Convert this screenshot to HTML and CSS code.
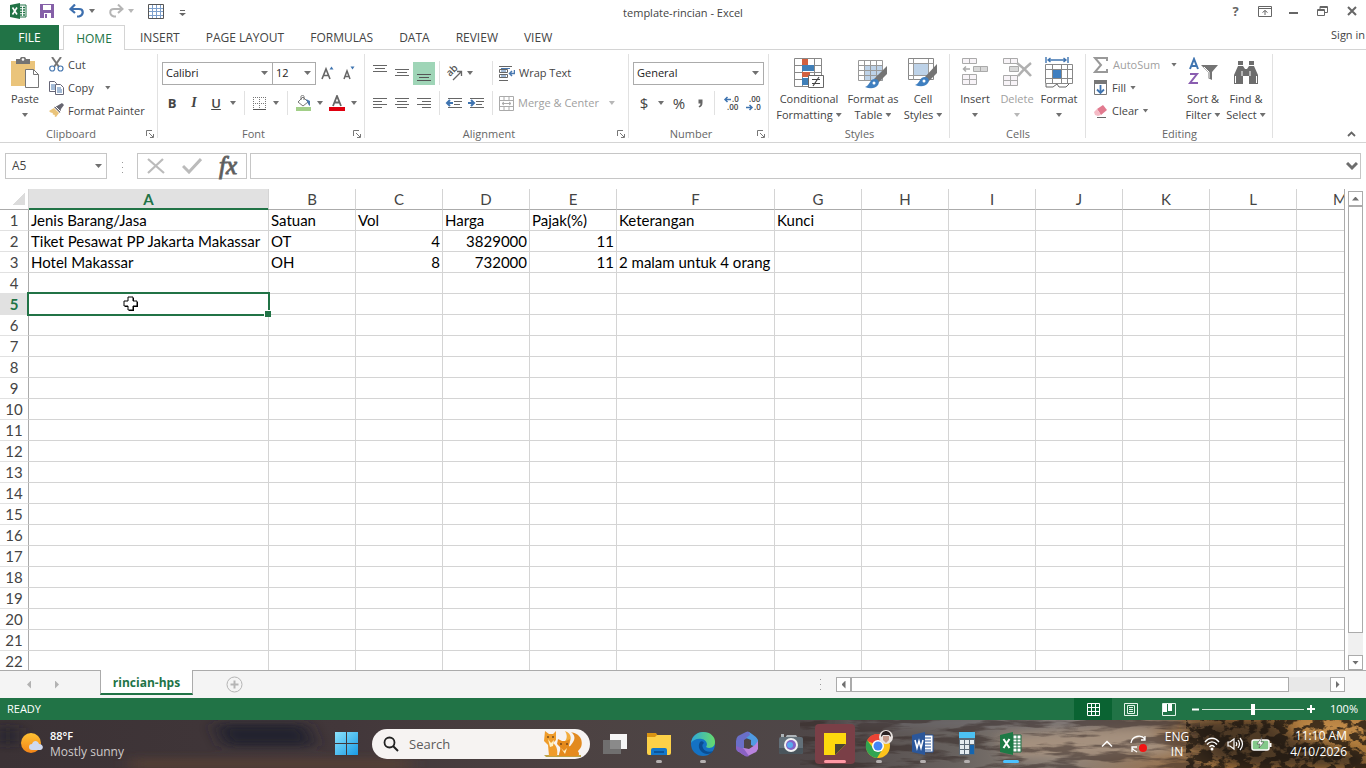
FILE: index.html
```html
<!DOCTYPE html>
<html lang="en">
<head>
<meta charset="utf-8">
<title>template-rincian - Excel</title>
<link rel="stylesheet" href="styles.css">
</head>
<body>
<header class="titlebar">
  <div class="quick">
    <svg class="app" width="17" height="17" viewBox="0 0 17 17"><path d="M8 2h8v12H8z" fill="#fff" stroke="#217346"/><path d="M10 4.500h2M13 4.500h2M10 7h2M13 7h2M10 9.500h2M13 9.500h2M10 12h2M13 12h2" stroke="#217346" stroke-width="1.400"/><path d="M0 2 10 0v16L0 14z" fill="#217346"/><path d="m2.500 4.500 4.500 7M7 4.500l-4.500 7" stroke="#fff" stroke-width="1.600"/></svg>
    <button class="q" aria-label="Save"><svg width="14" height="14" viewBox="0 0 14 14"><path d="M0 0h14v14H0z" fill="#8560a8"/><path d="M3 1h8v5H3zM4 9h7v5H4z" fill="#fff"/><path d="M5 10h2v4H5z" fill="#8560a8"/></svg></button>
    <button class="q" aria-label="Undo"><svg width="16" height="14" viewBox="0 0 16 14"><path d="M2 5h8c5 0 5 6 0 7.500H8M6 .5 1.500 5 6 9" fill="none" stroke="#3d6fae" stroke-width="2.200"/></svg></button><i class="arr"></i>
    <button class="q redo" aria-label="Redo"><svg width="16" height="14" viewBox="0 0 16 14"><path d="M14 5H6c-5 0-5 6 0 7.500h2M10 .5 14.500 5 10 9" fill="none" stroke="#b5b5b5" stroke-width="2"/></svg></button><i class="arr pale"></i>
    <button class="q table" aria-label="Table"><svg width="16" height="15" viewBox="0 0 16 15"><path d="M.5.5h15v14H.5z" fill="#fff" stroke="#555"/><path d="M1 4.500h14M1 7.500h14M1 11.500h14M4.500 1v13M8.500 1v13M12.500 1v13" stroke="#7da0cc"/></svg></button>
    <button class="q more" aria-label="Customize toolbar"><svg width="7" height="6" viewBox="0 0 7 6"><path d="M1 .5h5" stroke="#666"/><path d="M0 3h7L3.500 6z" fill="#666"/></svg></button>
  </div>
  <h1 class="doc">template-rincian - Excel</h1>
  <div class="window">
    <button aria-label="Help"><b>?</b></button>
    <button aria-label="Ribbon display options"><svg width="14" height="11" viewBox="0 0 14 11"><path d="M.5.5h13v10H.5zM1 2.500h12M7 9V4.500M4.500 6.500 7 4.500l2.500 2" fill="none" stroke="#666"/></svg></button>
    <button aria-label="Minimize"><svg width="9" height="11" viewBox="0 0 9 11"><path d="M0 7h9" stroke="#666" stroke-width="2"/></svg></button>
    <button aria-label="Restore"><svg width="11" height="10" viewBox="0 0 11 10"><path d="M.5 3.500h7v6h-7zM.5 4.500h7M3 3V.5h7.500v6H8M3 1.500h7" fill="none" stroke="#666"/></svg></button>
    <button aria-label="Close"><svg width="10" height="10" viewBox="0 0 10 10"><path d="m1 1 8 8M9 1 1 9" stroke="#666" stroke-width="2"/></svg></button>
  </div>
</header>
<nav class="tabs">
  <button class="file">FILE</button><button class="on">HOME</button><button>INSERT</button><button>PAGE LAYOUT</button><button>FORMULAS</button><button>DATA</button><button>REVIEW</button><button>VIEW</button>
  <a class="signin" href="#">Sign in</a>
</nav>
<section class="ribbon" aria-label="Home ribbon">
  <div class="group clip">
    <div class="body">
      <button class="big paste"><svg width="30" height="32" viewBox="0 0 30 32"><path d="M1 4h24v25H1z" fill="#eac47b"/><path d="M6 2h4c0-3 6-3 6 0h4v5H6z" fill="#737373"/><circle cx="13" cy="2.500" r="1.300" fill="#fff"/><path d="M15.500 12.500h8l5 5v13h-13z" fill="#fff" stroke="#777"/><path d="M23.500 12.500v5h5" fill="none" stroke="#777"/></svg><span>Paste</span><i class="arr"></i></button>
      <div class="stack">
        <button class="line"><svg width="15" height="15" viewBox="0 0 15 15"><path d="m3 0 7 10M12 0 5 10" stroke="#777" stroke-width="2"/><circle cx="3.200" cy="11.500" r="2.500" fill="#fff" stroke="#4878b0" stroke-width="1.200"/><circle cx="11.500" cy="11.500" r="2.500" fill="#fff" stroke="#4878b0" stroke-width="1.200"/></svg>Cut</button>
        <button class="line"><svg width="15" height="14" viewBox="0 0 15 14"><path d="M.5.500h5l2 2v8h-7z" fill="#fff" stroke="#667"/><path d="M2 4h4M2 6h4M2 8h4" stroke="#4878b0"/><path d="M6.500 3.500h5l3 3v7h-8z" fill="#fff" stroke="#667"/><path d="M8 7h4M8 9h5M8 11h5" stroke="#4878b0"/></svg>Copy<i class="arr far"></i></button>
        <button class="line"><svg width="15" height="15" viewBox="0 0 15 15"><path d="m0 8 5-3 5 5-3 4c-1 0-2-1-1-2-2 0-3-1-2-2-2 0-3-1-4-2z" fill="#eac47b"/><path d="m5 4 3-1 5-3 2 2-3 4-1 4z" fill="#666570"/><path d="m6 3 6 6" stroke="#fff"/></svg>Format Painter</button>
      </div>
    </div>
    <div class="label"><span>Clipboard</span><button class="launch" aria-label="Clipboard settings"><svg width="8" height="8" viewBox="0 0 8 8"><path d="M.5 6V.5H6M3 3l4 4M7.500 4v3.500H4" fill="none" stroke="#777"/></svg></button></div>
  </div>
  <div class="group font">
    <div class="body rows">
      <div class="row combos"><select class="face" aria-label="Font"><option>Calibri</option></select><select class="size" aria-label="Font size"><option>12</option></select>
        <button class="t22" aria-label="Increase font size"><svg width="13" height="14" viewBox="0 0 13 14"><path d="M1 13 5 3l4 10M2.500 9.500h5" fill="none" stroke="#666" stroke-width="1.600"/><path d="m8.500 3.500 2-3 2 3z" fill="#3f74b0"/></svg></button>
        <button class="t22" aria-label="Decrease font size"><svg width="12" height="14" viewBox="0 0 12 14"><path d="m1 13 3-8 3 8M2 10.500h4" fill="none" stroke="#666" stroke-width="1.500"/><path d="m7.500.5 2 3 2-3z" fill="#3f74b0"/></svg></button></div>
      <div class="row second">
        <button class="t22"><b>B</b></button><button class="t22 ital">I</button><button class="t22 under">U</button><button class="t12" aria-label="Underline options"><i class="arr"></i></button><i class="sep s10"></i>
        <button class="t20" aria-label="Borders"><svg width="13" height="13" viewBox="0 0 13 13"><path d="M.5 0v12M6.500 0v12M12.500 0v12M0 .5h13M0 6.500h13" fill="none" stroke="#777" stroke-dasharray="1 1"/><path d="M0 12.500h13" stroke="#555"/></svg></button><button class="t14" aria-label="Border options"><i class="arr"></i></button><i class="sep s8"></i>
        <button class="t24" aria-label="Fill color"><svg width="17" height="16" viewBox="0 0 17 16"><path d="m3 7 5-5 5 5-5 4z" fill="#fff" stroke="#777"/><path d="M6 5V1.500c0-1.500 3-1.500 3 0V5" fill="none" stroke="#777"/><path d="m11 4 4 2v5c-2-1-2-3-4-7" fill="#4878b0"/><path d="M1 12h15v4H1z" fill="#a2cf88"/></svg></button><button class="t10" aria-label="Fill color options"><i class="arr"></i></button>
        <button class="t24" aria-label="Font color"><svg width="16" height="16" viewBox="0 0 16 16"><path d="m4 11 4-10 4 10M5.500 7.500h5" fill="none" stroke="#666" stroke-width="1.800"/><path d="M0 12h16v4H0z" fill="#e0000f"/></svg></button><button class="t10" aria-label="Font color options"><i class="arr"></i></button>
      </div>
    </div>
    <div class="label"><span>Font</span><button class="launch" aria-label="Font settings"><svg width="8" height="8" viewBox="0 0 8 8"><path d="M.5 6V.5H6M3 3l4 4M7.500 4v3.500H4" fill="none" stroke="#777"/></svg></button></div>
  </div>
  <div class="group align">
    <div class="body rows">
      <div class="row">
        <button class="t22 up" aria-label="Top align"><svg width="14" height="8" viewBox="0 0 14 8"><path d="M0 .5h14M2 3.500h10M0 6.500h14" stroke="#666"/></svg></button><button class="t22" aria-label="Middle align"><svg width="14" height="8" viewBox="0 0 14 8"><path d="M0 .5h14M2 3.500h10M0 6.500h14" stroke="#666"/></svg></button><button class="t22 down active" aria-label="Bottom align"><svg width="14" height="8" viewBox="0 0 14 8"><path d="M0 .5h14M2 3.500h10M0 6.500h14" stroke="#555"/></svg></button><i class="sep s8"></i>
        <span class="slot"><button class="t22" aria-label="Orientation"><svg width="18" height="18" viewBox="0 0 18 18"><text x="0" y="0" transform="translate(5 13) rotate(-45)" class="ab">ab</text><path d="m8 16 8-8M12 7.500h4.500V12" fill="none" stroke="#666" stroke-width="1.300"/></svg></button><button class="t10" aria-label="Orientation options"><i class="arr"></i></button></span><i class="sep s8"></i>
        <button class="line"><svg width="16" height="15" viewBox="0 0 16 15"><path d="M0 .5h13M.500 3.500h8v3h-8zM.500 8.500h8v3h-8zM0 14.500h9" fill="none" stroke="#666"/><path d="M2 2.500h9M2 5h5M2 10h5" stroke="#4878b0"/><path d="M15.500 4v3.500H11M13 5l-2.500 2.500L13 10" fill="none" stroke="#4878b0" stroke-width="1.500"/></svg>Wrap Text</button></div>
      <div class="row second">
        <button class="t22" aria-label="Align left"><svg width="14" height="11" viewBox="0 0 14 11"><path d="M0 .5h14M0 3.500h9M0 6.500h14M0 9.500h9" stroke="#666"/></svg></button><button class="t22" aria-label="Center"><svg width="14" height="11" viewBox="0 0 14 11"><path d="M0 .5h14M2 3.500h10M0 6.500h14M2 9.500h10" stroke="#666"/></svg></button><button class="t22" aria-label="Align right"><svg width="14" height="11" viewBox="0 0 14 11"><path d="M0 .5h14M5 3.500h9M0 6.500h14M5 9.500h9" stroke="#666"/></svg></button><i class="sep s8"></i>
        <span class="slot"><button class="t22" aria-label="Decrease indent"><svg width="16" height="11" viewBox="0 0 16 11"><path d="M2 .5h14M8 3.500h8M8 6.500h6M2 9.500h14" stroke="#666"/><path d="M7 5H1M4 2 1 5l3 3" fill="none" stroke="#3f74b0" stroke-width="2"/></svg></button><button class="t22" aria-label="Increase indent"><svg width="16" height="11" viewBox="0 0 16 11"><path d="M2 .5h14M8 3.500h8M8 6.500h6M2 9.500h14" stroke="#666"/><path d="M0 5h6M3 2l3 3-3 3" fill="none" stroke="#3f74b0" stroke-width="2"/></svg></button></span><i class="sep s8"></i>
        <button class="line off merge"><svg width="15" height="15" viewBox="0 0 15 15"><path d="M.5.500h14v14H.5zM1 4.500h13M1 10.500h13M5 1v3M10 1v3M5 11v3M10 11v3M3 7.500h9M5 6 3 7.500 5 9M10 6l2 1.500L10 9" fill="none" stroke="#aaa"/></svg>Merge &amp; Center<i class="arr pale"></i></button>
      </div>
    </div>
    <div class="label"><span>Alignment</span><button class="launch" aria-label="Alignment settings"><svg width="8" height="8" viewBox="0 0 8 8"><path d="M.5 6V.5H6M3 3l4 4M7.500 4v3.500H4" fill="none" stroke="#777"/></svg></button></div>
  </div>
  <div class="group number">
    <div class="body rows">
      <div class="row"><select class="format" aria-label="Number format"><option>General</option></select></div>
      <div class="row second"><button class="t22 sign">$</button><button class="t12" aria-label="Currency options"><i class="arr"></i></button><button class="t24 sign">%</button><button class="t18" aria-label="Comma style"><svg width="5" height="9" viewBox="0 0 5 9"><path d="M.5.500h4v3c0 3-1 4-3 5l-1-1c1.500-1 2-2 2-3h-2z" fill="#666"/></svg></button><i class="sep s10"></i>
        <button class="t22 dec" aria-label="Increase decimal"><svg width="17" height="16" viewBox="0 0 17 16"><path d="M7 4.500H1M3.500 2 1 4.500 3.500 7" fill="none" stroke="#3f74b0" stroke-width="1.500"/><text x="8" y="7">.0</text><text x="3" y="15">.00</text></svg></button><button class="t22 dec" aria-label="Decrease decimal"><svg width="17" height="16" viewBox="0 0 17 16"><path d="M0 12.500h6M3.500 10 6 12.500 3.500 15" fill="none" stroke="#3f74b0" stroke-width="1.500"/><text x="3" y="7">.00</text><text x="8" y="15">.0</text></svg></button></div>
    </div>
    <div class="label"><span>Number</span><button class="launch" aria-label="Number settings"><svg width="8" height="8" viewBox="0 0 8 8"><path d="M.5 6V.5H6M3 3l4 4M7.500 4v3.500H4" fill="none" stroke="#777"/></svg></button></div>
  </div>
  <div class="group styles">
    <div class="body">
      <button class="big w72"><svg width="30" height="32" viewBox="0 0 30 32"><path d="M.5 1.500h27v28H.5zM1 8.500h26M1 15.500h26M1 22.500h26M8.500 2v27M20.500 2v27" fill="#fff" stroke="#888"/><path d="M8 2h6v6H8zM8 15h8v5H8z" fill="#d2603f"/><path d="M8 8h12v6H8zM8 21h6v7H8z" fill="#3f7fb8"/><path d="M14.500 18.500h15v12h-15z" fill="#fff" stroke="#666"/><path d="M18 22.500h8M18 26.500h8M25 20l-6 9" stroke="#444" stroke-width="1.200"/></svg><span>Conditional</span><span>Formatting<i class="arr"></i></span></button>
      <button class="big w56"><svg width="30" height="32" viewBox="0 0 30 32"><path d="M.5 3.500h24v20H.5z" fill="#fff"/><path d="M7 9h18v15H7z" fill="#bdd2e8"/><path d="M.5 3.500h24v20H.5zM1 8.500h24M1 13.500h24M1 18.500h24M6.500 4v20M12.500 4v20M18.500 4v20" fill="none" stroke="#999"/><path d="M29 9v8l-9 9-4-4z" fill="#747474"/><path d="M17 22c3 0 5 3 3 6-3 4-8 4-13 2 5-1 4-8 10-8" fill="#3f7fc0"/><circle cx="16" cy="26" r="1.500" fill="#fff"/></svg><span>Format as</span><span>Table<i class="arr"></i></span></button>
      <button class="big w44"><svg width="30" height="32" viewBox="0 0 30 32"><path d="M.5 1.500h25v21H.5z" fill="#fff" stroke="#888"/><path d="M6 7h14v11H6z" fill="#bdd2e8"/><path d="M.5 6.500h25M.5 18.500h25M5.500 2v21M20.500 2v21" stroke="#999"/><path d="M29 7v9l-9 9-4-4z" fill="#747474"/><path d="M17 20c3 0 5 3 3 6-3 4-8 4-13 2 5-1 4-8 10-8" fill="#3f7fc0"/><circle cx="16" cy="24" r="1.500" fill="#fff"/></svg><span>Cell</span><span>Styles<i class="arr"></i></span></button>
    </div>
    <div class="label"><span>Styles</span></div>
  </div>
  <div class="group cells">
    <div class="body">
      <button class="big w42"><svg width="28" height="32" viewBox="0 0 28 32"><path d="M1.500 1.500h14v5h-14zM8.500 1.500v5M1.500 17.500h14v10h-14zM1.500 22.500h14M8.500 17.500v10" fill="#f8f4f8" stroke="#aaa"/><path d="M12.500 9.500h14v5h-14zM19.500 9.500v5" fill="#d8d8d8" stroke="#aaa"/><path d="M9 12H3M5 9.500 2.500 12 5 14.500" fill="none" stroke="#aaa" stroke-width="1.500"/></svg><span>Insert</span><i class="arr"></i></button>
      <button class="big w42 off"><svg width="30" height="32" viewBox="0 0 30 32"><path d="M1.500 1.500h14v5h-14zM8.500 1.500v5M1.500 18.500h14v10h-14zM1.500 23.500h14M8.500 18.500v10" fill="#f8f4f8" stroke="#aaa"/><path d="M7.500 9.500h9v5h-9z" fill="#d8d8d8" stroke="#aaa"/><path d="M15 6c4 3 9 7 14 13M29 6c-5 4-9 8-13 13" fill="none" stroke="#b0b0b0" stroke-width="2.500"/></svg><span>Delete</span><i class="arr pale"></i></button>
      <button class="big w42"><svg width="28" height="32" viewBox="0 0 28 32"><path d="M1 0v6M23 0v6M3 3h18M5.500 1 3 3l2.500 2M18.500 1 21 3l-2.500 2" fill="none" stroke="#3f74b0" stroke-width="1.400"/><path d="M.5 7.500h27v19H.5zM1 12.500h26M1 21.500h26M7.500 8v18M16.500 8v18M22.500 8v18" fill="#fff" stroke="#888"/><path d="M8 13h8v8H8z" fill="#3f7fc0"/><path d="M1 27v3h7l4-3 2 3h7l3-3" fill="none" stroke="#666"/></svg><span>Format</span><i class="arr"></i></button>
    </div>
    <div class="label"><span>Cells</span></div>
  </div>
  <div class="group editing">
    <div class="body">
      <div class="stack">
        <button class="line off"><svg width="16" height="16" viewBox="0 0 16 16"><path d="M14 4V1H2l6 7-6 7h12v-3" fill="none" stroke="#999" stroke-width="2"/></svg>AutoSum<i class="arr"></i></button>
        <button class="line"><svg width="15" height="15" viewBox="0 0 15 15"><path d="M1.500.500h12v14h-12z" fill="#fff" stroke="#777"/><path d="M1 0h13v4H1z" fill="#777"/><path d="M7.500 5v8M4 9.500 7.500 13 11 9.500" fill="none" stroke="#3f74b0" stroke-width="1.800"/></svg>Fill<i class="arr"></i></button>
        <button class="line"><svg width="15" height="14" viewBox="0 0 15 14"><path d="m4 5 6-4 4 5-6 5z" fill="#e27a8f"/><path d="m4 5 4 6-3 1-3-1-1-3z" fill="#f5bbc6"/><path d="M4 13.500h9" stroke="#666"/></svg>Clear<i class="arr"></i></button>
      </div>
      <button class="big w44"><svg width="30" height="32" viewBox="0 0 30 32"><path d="m2 12 4-10 4 10M3.500 9h5" fill="none" stroke="#3f74b0" stroke-width="2"/><path d="M2 17h7L2 26h8" fill="none" stroke="#8a5db0" stroke-width="2"/><path d="M13 8h17l-6 7v8l-4-2v-6z" fill="#747474"/><path d="m16 10 5 5v6" fill="none" stroke="#fff"/></svg><span>Sort &amp;</span><span>Filter<i class="arr"></i></span></button>
      <button class="big w42"><svg width="26" height="32" viewBox="0 0 26 32"><path d="M5 4h5v5l2 3h2l2-3V4h5v5l4 9v9h-9v-8h-6v8H1v-9l4-9z" fill="#6d6d6d"/><path d="M5 8.500h5M16 8.500h5M2.500 19v7M23.500 19v7M9 14v5M17 14v5" stroke="#fff"/></svg><span>Find &amp;</span><span>Select<i class="arr"></i></span></button>
    </div>
    <div class="label"><span>Editing</span></div>
  </div>
  <button class="collapse" aria-label="Collapse ribbon"><svg width="9" height="6" viewBox="0 0 9 6"><path d="m1 5 3.500-3.500L8 5" fill="none" stroke="#666" stroke-width="1.800"/></svg></button>
</section>
<section class="formula">
  <select class="name" aria-label="Name box"><option>A5</option></select>
  <i class="dots"></i>
  <div class="fx"><button aria-label="Cancel"><svg width="18" height="16" viewBox="0 0 18 16"><path d="m1 1 16 14M16 1 1 15" stroke="#bbb" stroke-width="2.200"/></svg></button><button aria-label="Enter"><svg width="20" height="16" viewBox="0 0 20 16"><path d="m1 8 6 6L19 1" fill="none" stroke="#bbb" stroke-width="3"/></svg></button><button class="fn">fx</button></div>
  <div class="entry"><input aria-label="Formula bar"><button aria-label="Expand formula bar"><svg width="12" height="9" viewBox="0 0 12 9"><path d="m1 1 5 5 5-5" fill="none" stroke="#6d6d6d" stroke-width="3"/></svg></button></div>
</section>
<main class="work">
  <div class="gridbox">
  <table class="grid">
    <colgroup><col class="c0"><col class="cA"><col><col><col><col><col class="cF"><col><col><col><col><col><col><col></colgroup>
    <thead><tr><th class="corner"><th class="sel">A<th>B<th>C<th>D<th>E<th>F<th>G<th>H<th>I<th>J<th>K<th>L<th>M</thead>
    <tbody>
    <tr><th>1<td>Jenis Barang/Jasa<td>Satuan<td>Vol<td>Harga<td>Pajak(%)<td>Keterangan<td>Kunci<td><td><td><td><td><td>
    <tr><th>2<td>Tiket Pesawat PP Jakarta Makassar<td>OT<td class="n">4<td class="n">3829000<td class="n">11<td><td><td><td><td><td><td><td>
    <tr><th>3<td>Hotel Makassar<td>OH<td class="n">8<td class="n">732000<td class="n">11<td>2 malam untuk 4 orang<td><td><td><td><td><td><td>
    <tr><th>4<td><td><td><td><td><td><td><td><td><td><td><td><td>
    <tr><th class="sel">5<td class="cur"><svg class="pointer" width="15" height="15" viewBox="0 0 15 15"><path d="M6 2h5v4h4v5h-4v4H6v-4H2V6h4z" fill="#000"/><path d="M5 1h5v4h4v5h-4v4H5v-4H1V5h4z" fill="#fff" stroke="#000"/></svg><td><td><td><td><td><td><td><td><td><td><td><td>
    <tr><th>6<td><td><td><td><td><td><td><td><td><td><td><td><td>
    <tr><th>7<td><td><td><td><td><td><td><td><td><td><td><td><td>
    <tr><th>8<td><td><td><td><td><td><td><td><td><td><td><td><td>
    <tr><th>9<td><td><td><td><td><td><td><td><td><td><td><td><td>
    <tr><th>10<td><td><td><td><td><td><td><td><td><td><td><td><td>
    <tr><th>11<td><td><td><td><td><td><td><td><td><td><td><td><td>
    <tr><th>12<td><td><td><td><td><td><td><td><td><td><td><td><td>
    <tr><th>13<td><td><td><td><td><td><td><td><td><td><td><td><td>
    <tr><th>14<td><td><td><td><td><td><td><td><td><td><td><td><td>
    <tr><th>15<td><td><td><td><td><td><td><td><td><td><td><td><td>
    <tr><th>16<td><td><td><td><td><td><td><td><td><td><td><td><td>
    <tr><th>17<td><td><td><td><td><td><td><td><td><td><td><td><td>
    <tr><th>18<td><td><td><td><td><td><td><td><td><td><td><td><td>
    <tr><th>19<td><td><td><td><td><td><td><td><td><td><td><td><td>
    <tr><th>20<td><td><td><td><td><td><td><td><td><td><td><td><td>
    <tr><th>21<td><td><td><td><td><td><td><td><td><td><td><td><td>
    <tr><th>22<td><td><td><td><td><td><td><td><td><td><td><td><td>
    </tbody>
  </table>
  </div>
  <div class="vscroll"><button class="step" aria-label="Scroll up"><i class="tri n"></i></button><i class="thumb"></i><i class="track"></i><button class="step" aria-label="Scroll down"><i class="tri s"></i></button></div>
</main>
<section class="sheets">
  <div class="navs"><button aria-label="Previous sheet"><i class="tri w pale"></i></button><button aria-label="Next sheet"><i class="tri e pale"></i></button></div>
  <button class="sheet">rincian-hps</button>
  <button class="add" aria-label="New sheet"><svg width="17" height="17" viewBox="0 0 17 17"><circle cx="8.500" cy="8.500" r="7.500" fill="none" stroke="#b5b5b5"/><path d="M8.500 4.500v8M4.500 8.500h8" stroke="#b5b5b5" stroke-width="2"/></svg></button>
  <i class="dots"></i>
  <div class="hscroll"><button class="step" aria-label="Scroll left"><i class="tri w"></i></button><i class="thumb"></i><i class="track"></i><button class="step" aria-label="Scroll right"><i class="tri e"></i></button></div>
</section>
<footer class="status">
  <span class="ready">READY</span>
  <button class="view on" aria-label="Normal view"><svg width="13" height="13" viewBox="0 0 13 13"><path d="M.5.500h12v12H.5zM4.500 0v13M8.500 0v13M0 4.500h13M0 8.500h13" fill="none" stroke="#fff"/></svg></button>
  <button class="view" aria-label="Page layout view"><svg width="14" height="13" viewBox="0 0 14 13"><path d="M.5.500h13v12H.5zM3.500 2.500h7v8h-7zM5 4.500h4M5 6.500h4M5 8.500h4" fill="none" stroke="#e4f4ea"/></svg></button>
  <button class="view" aria-label="Page break preview"><svg width="14" height="13" viewBox="0 0 14 13"><path d="M.5.500h13v12H.5z" fill="none" stroke="#e4f4ea"/><path d="M1 1h4v8H1zM6 1h4v7H6z" fill="#fff"/></svg></button>
  <button class="zoomb" aria-label="Zoom out"><svg width="7" height="7" viewBox="0 0 7 7"><path d="M0 3.500h7" stroke="#fff" stroke-width="2"/></svg></button>
  <input class="zoom" type="range" min="0" max="100" value="50" aria-label="Zoom">
  <button class="zoomb" aria-label="Zoom in"><svg width="8" height="8" viewBox="0 0 8 8"><path d="M0 4h8M4 0v8" stroke="#fff" stroke-width="2"/></svg></button>
  <span class="pct">100%</span>
</footer>
<footer class="taskbar">
  <svg class="scene" viewBox="0 0 1366 48" preserveAspectRatio="none">
    <defs>
      <linearGradient id="ground"><stop offset="0" stop-color="#3b3235"/><stop offset=".25" stop-color="#42373a"/><stop offset=".42" stop-color="#4c4242"/><stop offset=".6" stop-color="#4f4748"/><stop offset=".7" stop-color="#68625f"/><stop offset=".78" stop-color="#8d8279"/><stop offset=".84" stop-color="#947558"/><stop offset=".9" stop-color="#a2713a"/><stop offset="1" stop-color="#b07c3c"/></linearGradient>
      <filter id="soft" x="-20%" y="-50%" width="140%" height="200%"><feGaussianBlur stdDeviation="9 5"/></filter>
      <filter id="weed" x="0" y="0" width="100%" height="100%" color-interpolation-filters="sRGB"><feTurbulence type="fractalNoise" baseFrequency=".08 .12" numOctaves="4" seed="8"/><feColorMatrix values="0 0 0 0 .1  0 0 0 0 .08  0 0 0 0 .06  0 9 0 0 -4"/></filter>
      <filter id="sand" x="0" y="0" width="100%" height="100%" color-interpolation-filters="sRGB"><feTurbulence type="fractalNoise" baseFrequency=".02 .12" numOctaves="4" seed="3"/><feColorMatrix values="0 0 0 0 .2  0 0 0 0 .15  0 0 0 0 .14  0 6 0 0 -2.800"/></filter>
    </defs>
    <path fill="url(#ground)" d="M0 0h1366v48H0z"/>
    <g filter="url(#soft)"><path d="M215 4h90l10 22h-90zM0 8h16v16H0z" fill="#20202e"/><path d="M130 40h280v8H130z" fill="#5c4236"/><path d="M1000 16l150-8 30 26-170 4z" fill="#a5917f"/><path d="M850 0h330v6H850z" fill="#6e6b70"/><path d="M1300 0h66v18h-66z" fill="#c08a48"/></g>
    <path d="M800 0h400v48H800z" filter="url(#sand)" opacity=".5"/>
    <path d="M1186 4l24-4h70l10 16 76 20v12h-110l-50-8z" fill="#29221c" filter="url(#soft)" opacity=".7"/>
    <path d="M1186 0h180v48h-180z" filter="url(#weed)" opacity=".75"/>
  </svg>
  <button class="weather"><svg width="24" height="24" viewBox="0 0 24 24"><defs><linearGradient id="sun" x2="0" y2="1"><stop stop-color="#ffc233"/><stop offset="1" stop-color="#f28418"/></linearGradient></defs><circle cx="11" cy="11" r="10" fill="url(#sun)"/><path d="M12 18a3 3 0 0 1 0-6c1-4 6-4 7 0 5 0 5 6 1 6z" fill="#cfd9ef"/></svg><span><b>88°F</b><small>Mostly sunny</small></span></button>
  <div class="apps">
    <button class="app-btn" aria-label="Start"><svg width="24" height="24" viewBox="0 0 24 24"><defs><linearGradient id="win" x2="1" y2="1"><stop stop-color="#8be2fb"/><stop offset="1" stop-color="#199be5"/></linearGradient></defs><path d="M0 0h11v11H0zM12 0h11v11H12zM0 12h11v11H0zM12 12h11v11H12z" fill="url(#win)"/></svg></button>
    <label class="search"><svg width="16" height="16" viewBox="0 0 16 16"><circle cx="6.500" cy="6.500" r="5" fill="none" stroke="#222" stroke-width="1.800"/><path d="m10 10 5 5" stroke="#222" stroke-width="2"/></svg><input placeholder="Search" aria-label="Search"><svg width="42" height="28" viewBox="0 0 42 28"><path d="M2 25h37v2H4z" fill="#bda247"/><path d="M30 24c12-4 10-12 9-15-2-5-7-6-10-7 6 5 3 9 0 13-3 3-4 7-1 9" fill="#e28a20"/><path d="M22 12c4-3 3-8 1-11 8 3 6 9 4 13z" fill="#f2ac3d"/><path d="m3 1 4 3h4l3-3v9l-3 3c4 3 5 8 4 13H7l-1-11-4-4z" fill="#ef9c2b"/><path d="m16 9 4 2h4l4-2-1 7c4 2 10 4 10 8 0 3-3 2-20 2 0-4 2-6 1-9l-3-3z" fill="#e58a1d"/><path d="m6 9 3 4 3-3-1 6-3 1zM19 18l3 3 3-3-2 6z" fill="#fff0c4"/><path d="M5 7h2M10 7h2M18 14h2M24 14h2" stroke="#402414"/></svg></label>
    <button class="app-btn" aria-label="Task view"><svg width="26" height="24" viewBox="0 0 26 24"><path d="M8 2h17v15H8z" fill="#f5f5f5"/><path d="M1 8h18v14H1z" fill="#777" opacity=".85"/></svg></button>
    <button class="app-btn run" aria-label="File Explorer"><svg width="26" height="24" viewBox="0 0 26 24"><path d="M1 1h9l2 3h12v6H1z" fill="#d99413"/><path d="M1 5h8l2-2h14v18q0 2-2 2H3q-2 0-2-2z" fill="#fcd148"/><path d="M5 23v-5q0-2 2-2h12q2 0 2 2v5z" fill="#1477c9"/><path d="M8 20h10" stroke="#0c5498" stroke-width="2"/></svg></button>
    <button class="app-btn run" aria-label="Edge"><svg width="26" height="26" viewBox="0 0 26 26"><defs><linearGradient id="edge"><stop stop-color="#2ea7d9"/><stop offset="1" stop-color="#67dc6c"/></linearGradient></defs><circle cx="13" cy="13" r="12" fill="#1472c4"/><path d="M1 12C2 5 7 1 13 1c8 0 12 5 12 10 0 6-6 7-9 5 2-2 1-7-4-8C7 7 3 9 1 12" fill="url(#edge)"/><path d="M10 11c-3 5 0 11 7 12 3 0 5-1 6-3-4 2-9 0-10-3-1-2-1-4 1-5-1-2-3-2-4-1" fill="#0b4d91"/></svg></button>
    <button class="app-btn" aria-label="Microsoft 365"><svg width="26" height="26" viewBox="0 0 26 26"><path d="M12 1 4 5Q2 7 2 10v7q0 3 3 4l5-3V9l8-5-3-3q-1-1-3 0z" fill="#6a6fc8"/><path d="M15 1q8 5 9 8v8l-7-3V9l-5-2 4-3z" fill="#4f9be2"/><path d="M24 10v8q-1 3-4 4l-6 3q-3 0-6-2l-4-3 6-3 5 1 6-4z" fill="#b983de"/><path d="M2 15q0 4 3 6l6 4q2 1 4 0l-5-7z" fill="#8a62c4"/></svg></button>
    <button class="app-btn" aria-label="Camera"><svg width="26" height="22" viewBox="0 0 26 22"><path d="M3 1h3v3H3zM9 2h9l2 3H7z" fill="#aeb4b8"/><rect x="1" y="4" width="24" height="17" rx="2" fill="#637079"/><path d="M1 15h24v4q0 2-2 2H3q-2 0-2-2z" fill="#4a555c"/><circle cx="13" cy="12" r="7" fill="#f2f2f2"/><circle cx="13" cy="12" r="5" fill="#8562c6"/><circle cx="12" cy="12" r="3" fill="#58a9ee"/></svg></button>
    <button class="app-btn note run" aria-label="Sticky Notes"><svg width="24" height="24" viewBox="0 0 24 24"><path d="M1 1h22v11L12 23H1z" fill="#fdd80d"/><path d="M12 12h11L12 23z" fill="#4a4434"/></svg></button>
    <button class="app-btn run" aria-label="Chrome"><svg width="30" height="28" viewBox="0 0 30 28"><circle cx="14" cy="16" r="12" fill="#fcc31b"/><path d="M3 11C6 3 17 1 24 9l-7 2-6 3z" fill="#e94335"/><path d="M3 10c-4 9 2 17 10 18l5-8-9-2z" fill="#31a451"/><circle cx="14" cy="16" r="6" fill="#fff"/><circle cx="14" cy="16" r="4.500" fill="#4285f4"/><circle cx="22" cy="7" r="7" fill="#e8e2df"/><path d="M17 7c0-8 10-8 10 0l-2-2h-6z" fill="#2b2223"/><path d="M19 6h6v4l-3 3-3-3z" fill="#c29889"/></svg></button>
    <button class="app-btn run" aria-label="Word"><svg width="24" height="24" viewBox="0 0 24 24"><path d="M11 3h11v17H11z" fill="#fff" stroke="#2b579a"/><path d="M14 6h6M14 9h6M14 12h6M14 15h6M14 18h6" stroke="#2b579a"/><path d="M1 3 14 0v23L1 20z" fill="#2b579a"/><path d="m4 8 2 8 2-7 2 7 2-8" fill="none" stroke="#fff" stroke-width="1.500"/></svg></button>
    <button class="app-btn run" aria-label="Calculator"><svg width="20" height="24" viewBox="0 0 20 24"><path d="M2 0h16v23H2z" fill="#5b6976"/><path d="M2 0h16v6H2z" fill="#4cc1f2"/><path d="M3 8h4v4H3zM8 8h4v4H8zM13 8h4v4h-4zM3 13h4v4H3zM8 13h4v4H8zM3 18h4v4H3zM8 18h4v4H8z" fill="#e4ebef"/><path d="M13 13h4v9h-4z" fill="#1465b0"/></svg></button>
    <button class="app-btn run current" aria-label="Excel"><svg width="24" height="24" viewBox="0 0 24 24"><path d="M11 3h11v17H11z" fill="#fff" stroke="#217346"/><path d="M14 3v17M18 3v17M14 7h8M14 10h8M14 13h8M14 16h8" stroke="#217346"/><path d="M1 3 14 0v23L1 20z" fill="#1c7a45"/><path d="m4.500 7 6 9M10.500 7l-6 9" stroke="#fff" stroke-width="2"/></svg></button>
  </div>
  <div class="tray">
    <button class="chev" aria-label="Hidden icons"><svg width="12" height="8" viewBox="0 0 12 8"><path d="m1 6.500 5-5 5 5" fill="none" stroke="#fff" stroke-width="1.500"/></svg></button>
    <button class="sync" aria-label="Updates"><svg width="18" height="18" viewBox="0 0 18 18"><path d="M1 8c1-7 10-9 14-4M15 1v4h-4M2 17v-5h5M2 13c1 2 3 3 5 4" fill="none" stroke="#fff" stroke-width="1.300"/><circle cx="13" cy="13" r="4" fill="#f11414"/></svg></button>
    <button class="lang">ENG<br>IN</button>
    <button class="sys" aria-label="Network, volume, battery"><svg width="16" height="14" viewBox="0 0 16 14"><path d="M1 5c4-5 10-5 14 0M3 7.500c3-3.500 7-3.500 10 0M5.500 10c1.500-2 3.500-2 5 0" fill="none" stroke="#fff" stroke-width="1.400"/><circle cx="8" cy="12" r="1.500" fill="#fff"/></svg><svg width="17" height="14" viewBox="0 0 17 14"><path d="M1 5h2l4-3v10L3 9H1zM9 5q1.500 2 0 4M11 3q3 4 0 8M13 1q5 6 0 12" fill="none" stroke="#fff" stroke-width="1.200"/></svg><svg width="21" height="14" viewBox="0 0 21 14"><rect x="1" y="3" width="17" height="10" rx="2" fill="#84c98b" stroke="#fff" stroke-width="1.500"/><path d="M19.500 6v4" stroke="#fff" stroke-width="2"/><path d="m11 0-5 7h3l-1 4 5-6h-3z" fill="#fff" stroke="#333" stroke-width=".5"/></svg></button>
    <button class="clock">11:10 AM<br>4/10/2026</button>
  </div>
</footer>
</body>
</html>
```
FILE: styles.css
```css
* { box-sizing: border-box; }
body {
  margin: 0;
  height: 100vh;
  display: flex;
  flex-direction: column;
  overflow: hidden;
  background: #fff;
  color: #444;
  font: 11px/16px "Open Sans", "Noto Sans", sans-serif;
}
button, input, select { font: inherit; color: inherit; border: 0; background: none; padding: 0; margin: 0; border-radius: 0; }
button { display: flex; align-items: center; justify-content: center; white-space: nowrap; }
svg { display: block; flex: none; }
i { flex: none; }
select { appearance: none; }

.arr { width: 6px; height: 4px; background: #707070; clip-path: polygon(0 0, 100% 0, 50% 100%); }
.pale { opacity: .5; }

.titlebar { display: grid; grid-template-columns: 1fr auto 1fr; height: 25px; align-items: center; }
.quick { display: flex; align-items: center; padding: 0 0 3px 10px; }
.quick .q { margin-left: 13px; }
.quick .q + .q { margin-left: 15px; }
.quick .arr { margin-left: 4px; }
.quick .table { margin-left: 14px; }
.quick .more { margin: 3px 0 0 13px; }
.doc { margin: 0; font-size: 11px; font-weight: 400; line-height: 16px; }
.window { display: flex; justify-content: flex-end; padding: 0 0 3px; }
.window button { width: 29px; height: 22px; }
.window b { font-size: 13px; color: #666; }

.tabs { display: flex; height: 25px; border-bottom: 1px solid #d4d4d4; flex: none; }
.tabs button { padding: 1px 13px 0; font-size: 12px; }
.tabs .file { width: 59px; height: 25px; background: #217346; color: #fff; }
.tabs .on { width: 62px; height: 25px; margin: 0 2px 0 4px; border: 1px solid #d4d4d4; border-bottom: 0; background: #fff; color: #217346; }
.signin { margin: 2px 1px 0 auto; color: #444; text-decoration: none; }

.ribbon { display: flex; flex: none; height: 93px; border-bottom: 1px solid #d4d4d4; }
.group { display: flex; flex-direction: column; position: relative; padding-top: 3px; }
.group::after { content: ""; position: absolute; right: 0; top: 4px; bottom: 4px; width: 1px; background: #e1e1e1; }
.clip { width: 158px; }
.font { width: 207px; }
.align { width: 264px; }
.number { width: 140px; }
.styles { width: 181px; }
.cells { width: 136px; }
.editing { width: 187px; }
.body { display: flex; height: 71px; padding-left: 4px; }
.rows { flex-direction: column; padding-top: 9px; gap: 8px; }
.row { display: flex; align-items: center; height: 22px; }
.label { display: flex; align-items: center; height: 18px; color: #666; padding-top: 1px; }
.label span { flex: 1; text-align: center; }
.launch { width: 16px; height: 16px; }
.stack { display: flex; flex-direction: column; }
.line { height: 23px; gap: 4px; justify-content: flex-start; }
.line .far { margin-left: 7px; }
.big { flex-direction: column; justify-content: flex-start; padding-top: 4px; }
.big svg { margin-bottom: 2px; }
.big > span { display: flex; align-items: center; gap: 3px; height: 16px; }
.big > .arr { margin-top: 6px; }
.paste { width: 42px; margin-right: 3px; }
.off { color: #a0a0a0; }
.w72 { width: 72px; }
.w56 { width: 56px; }
.w44 { width: 44px; }
.w42 { width: 42px; }
.t22 { width: 22px; height: 23px; }
.t20 { width: 20px; }
.t24 { width: 24px; }
.t18 { width: 18px; }
.t14 { width: 14px; }
.t12 { width: 12px; }
.t10 { width: 10px; }
.sep { height: 24px; background: linear-gradient(#e1e1e1, #e1e1e1) center / 1px 100% no-repeat; }
.s8 { width: 8px; }
.s10 { width: 10px; }
.slot { display: flex; width: 45px; }
.ribbon select, .name {
  height: 23px; padding: 0 3px; border: 1px solid #ababab; color: #222;
  background: url("data:image/svg+xml,%3Csvg xmlns='http://www.w3.org/2000/svg' width='7' height='4'%3E%3Cpath d='M0 0h7L3.500 4z' fill='%23707070'/%3E%3C/svg%3E") right 4px center no-repeat;
}
.face { width: 111px; }
.size { width: 44px; margin-left: -1px; }
.format { width: 131px; }
.font .second { margin-left: -1px; }
.font .second b { font-size: 13px; }
.ital { font: italic bold 14px "Liberation Serif", serif; }
.under { font-size: 13px; font-weight: 600; text-decoration: underline; }
.up { align-items: flex-start; padding-top: 3px; }
.down { align-items: flex-end; padding-bottom: 3px; }
.active { background: #9fd5b7; }
.ab { font: 600 10px "Open Sans", sans-serif; fill: #555; }
.slot svg { overflow: visible; }
.align .line { gap: 4px; margin-left: 3px; }
.merge .arr { margin-left: 6px; }
.sign { font-size: 15px; }
.number .s10 { margin-right: 2px; }
.dec svg { overflow: visible; }
.dec text { font: 600 8px "Open Sans", sans-serif; fill: #444; }
.editing .body { padding-left: 7px; }
.editing .stack { width: 88px; }
.editing .line { gap: 4px; }
.editing .line.off .arr { margin-left: auto; margin-right: 4px; }
.collapse { width: 20px; height: 16px; margin: auto 5px 0 auto; }

.formula { display: flex; height: 46px; padding: 10px 5px; flex: none; }
.formula > * { height: 26px; }
.name { width: 102px; padding-left: 6px; border-color: #c6c6c6; color: #444; font-size: 12px; }
.dots { width: 3px; background: radial-gradient(circle, #999 1px, transparent 1px) center / 3px 5px; height: 11px; }
.formula .dots { margin: 8px 13px 0 14px; height: 13px; }
.fx { display: flex; width: 110px; border: 1px solid #c6c6c6; }
.fx button { flex: 1; }
.fx .fn { font: italic 25px/20px "Liberation Serif", serif; color: #555; -webkit-text-stroke: 1px #666; }
.entry { display: flex; flex: 1; margin-left: 3px; border: 1px solid #c6c6c6; }
.entry input { flex: 1; min-width: 0; padding: 0 4px; outline: 0; }
.entry button { width: 16px; }

.work { flex: 1; display: flex; min-height: 0; }
.gridbox { flex: 1; min-width: 0; overflow: hidden; border-right: 1px solid #ababab; }
.grid { table-layout: fixed; width: 1384px; border-collapse: separate; border-spacing: 0; font: 15px/19px Lato, "Open Sans", sans-serif; color: #000; }
.grid col { width: 87px; }
.grid .c0 { width: 29px; }
.grid .cA { width: 240px; }
.grid .cF { width: 158px; }
.grid tr { height: 21px; }
.grid td, .grid th { padding: 1px 2px 0; height: 21px; border-right: 1px solid #d4d4d4; border-bottom: 1px solid #d4d4d4; white-space: nowrap; }
.grid th { font-weight: 400; color: #444; border-bottom-color: #e1e1e1; }
.grid tbody th { border-right-color: #ababab; }
.grid thead th { border-bottom-color: #ababab; }
.grid .n { text-align: right; }
.grid th.sel { background: #e1e1e1; color: #217346; font-weight: 700; }
.grid thead th.sel { box-shadow: inset 0 -1px #217346; border-bottom-color: #217346; }
.grid .corner { background: linear-gradient(135deg, transparent 50%, #dcdcdc 50%) 13px 4px / 12px 12px no-repeat; }
.cur { position: relative; }
.cur::before { content: ""; position: absolute; z-index: 1; inset: -2px; border: 2px solid #217346; }
.cur::after { content: ""; position: absolute; z-index: 2; right: -3px; bottom: -3px; width: 6px; height: 6px; background: #217346; border: 1px solid #fff; border-width: 1px 0 0 1px; }
.pointer { position: absolute; left: 94px; top: 2px; }
.vscroll { display: flex; flex-direction: column; width: 21px; padding: 2px 3px 0; background: #fff; }
.step { flex: none; width: 15px; height: 15px; border: 1px solid #ababab; background: #fff; }
.thumb { border: 1px solid #ababab; background: #fff; }
.track { background: #f0f0f0; }
.vscroll .thumb { flex: 19; }
.vscroll .track { flex: 1; }
.tri { width: 7px; height: 4px; background: #707070; }
.tri.n { clip-path: polygon(50% 0, 100% 100%, 0 100%); }
.tri.s { clip-path: polygon(0 0, 100% 0, 50% 100%); }
.tri.w, .tri.e { width: 4px; height: 8px; }
.tri.w { clip-path: polygon(100% 0, 100% 100%, 0 50%); }
.tri.e { clip-path: polygon(0 0, 100% 50%, 0 100%); }

.sheets { display: flex; align-items: center; flex: none; height: 28px; background: #f4f4f4; border-top: 1px solid #ababab; }
.navs { display: flex; width: 100px; padding-left: 15px; }
.navs button { width: 28px; height: 20px; }
.sheet { align-self: flex-start; width: 93px; height: 25px; margin-top: -1px; padding-top: 3px; background: #fff; border: 1px solid #ababab; border-width: 0 1px 2px; border-bottom-color: #217346; color: #217346; font-weight: 700; font-size: 12px; }
.add { margin-left: 33px; }
.sheets .dots { margin-left: auto; }
.hscroll { display: flex; width: 509px; margin: 0 21px 0 14px; }
.hscroll .thumb { flex: 439; }
.hscroll .track { flex: 41; background: #e8e8e8; }

.status { display: flex; align-items: center; flex: none; height: 22px; padding: 0 8px 0 7px; background: #217346; color: #fff; }
.ready { margin-right: auto; }
.view { width: 38px; height: 22px; }
.view.on { background: #0a6332; }
.zoomb { width: 14px; height: 22px; }
.zoom { appearance: none; width: 102px; height: 12px; background: linear-gradient(#cfe3d6, #cfe3d6) center / 100% 1px no-repeat; }
.zoom::-webkit-slider-thumb { appearance: none; width: 4px; height: 11px; background: #fff; }
.pct { width: 40px; text-align: right; }

.taskbar { position: relative; display: flex; flex: none; height: 48px; color: #fff; background: #4a4040; }
.taskbar > * { position: relative; }
.taskbar .scene { position: absolute; inset: 0; width: 100%; height: 100%; }
.weather { gap: 6px; width: 325px; padding-left: 20px; justify-content: flex-start; text-align: left; }
.weather b, .weather small { display: block; font-size: 11px; font-weight: 600; line-height: 16px; }
.weather small { font-size: 12px; font-weight: 400; color: #cfcaca; }
.apps { display: flex; align-items: center; }
.app-btn { position: relative; z-index: 0; width: 44px; height: 48px; }
.search { display: flex; align-items: center; gap: 10px; width: 218px; height: 30px; margin: 0 3px; padding: 0 6px 0 11px; background: #f6f3f2; border-radius: 15px; color: #555; font-size: 13px; }
.search input { flex: 1; min-width: 0; outline: 0; }
.search input::placeholder { color: #5b5b5b; }
.run::after { content: ""; position: absolute; left: 19px; bottom: 5px; width: 6px; height: 3px; border-radius: 2px; background: #b5b0b0; }
.note::before { content: ""; position: absolute; z-index: -1; inset: 4px 2px; border-radius: 4px; background: #7a3f47; }
.note::after { left: 11px; width: 22px; background: #ff98a4; }
.current::after { left: 14px; width: 16px; background: #4cc2ff; }
.tray { display: flex; margin-left: auto; padding-right: 19px; font-size: 12px; }
.chev { width: 32px; }
.sync { width: 32px; }
.lang { width: 44px; line-height: 15px; }
.sys { width: 78px; gap: 7px; }
.clock { width: 70px; justify-content: flex-end; text-align: right; line-height: 16px; }
```
